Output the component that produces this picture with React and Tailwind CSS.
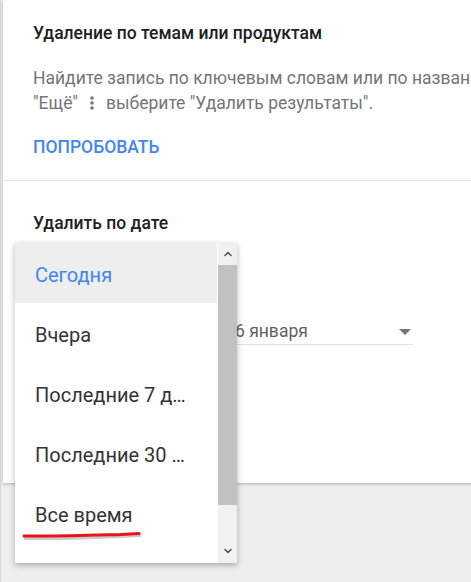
import { ChevronUp, ChevronDown } from 'lucide-react';

const periods = ['Сегодня', 'Вчера', 'Последние 7 дней', 'Последние 30 дней', 'Все время'];

function MoreIcon() {
  return (
    <svg width="6" height="16" viewBox="0 0 6 16" className="inline-block mx-[11px] align-[-2px]">
      <circle cx="3" cy="3" r="1.8" fill="#757575" />
      <circle cx="3" cy="8" r="1.8" fill="#757575" />
      <circle cx="3" cy="13" r="1.8" fill="#757575" />
    </svg>
  );
}

export default function App() {
  return (
    <div className="relative h-[582px] w-[471px] overflow-hidden bg-[#eeeeee] pl-[2px] border-l border-[#d6d6d6]" style={{ fontFamily: 'Roboto, "Noto Sans", sans-serif' }}>
      {/* карточка */}
      <div className="w-[520px] h-[483px] bg-white shadow-[0_1px_3px_rgba(0,0,0,0.25)]">
        <div className="pl-[30px] pt-[21px] pb-[21px] border-b border-[#e0e0e0]">
          <h2 className="text-[17.5px] leading-[24px] font-medium text-[#212121]">Удаление по темам или продуктам</h2>
          <p className="mt-[21px] text-[17.5px] leading-[25px] text-[#757575] whitespace-nowrap">
            Найдите запись по ключевым словам или по названию продукта, а затем в меню
            <br />
            "Ещё"<MoreIcon />выберите "Удалить результаты".
          </p>
          <div className="mt-[19px] text-[17.5px] leading-[24px] font-medium text-[#4285f4]">ПОПРОБОВАТЬ</div>
        </div>

        <div className="pl-[30px] pt-[30px]">
          <h2 className="text-[17.5px] leading-[24px] font-medium text-[#212121]">Удалить по дате</h2>
          <div className="mt-[78px] w-[380px] h-[32px] flex items-center justify-between border-b border-[#e0e0e0] pr-[2px] pt-[6px]">
            <span className="pl-[202px] text-[17.5px] text-[#616161]">6 января</span>
            <svg width="12" height="6" viewBox="0 0 12 6"><path d="M0 0h12L6 6z" fill="#757575" /></svg>
          </div>
        </div>
      </div>

      {/* выпадающий список */}
      <div className="absolute left-[14px] top-[243px] w-[222px] h-[320px] bg-white flex shadow-[0_2px_6px_rgba(0,0,0,0.3)]">
        <ul className="w-[202px] overflow-hidden">
          {periods.map((p, i) => (
            <li
              key={p}
              className={`h-[60px] flex items-center pl-[20px] pr-[24px] pt-[4px] text-[20px] ${i === 0 ? 'bg-[#eeeeee] text-[#4285f4]' : 'text-[#333333]'}`}
            >
              <span className="truncate">{p}</span>
            </li>
          ))}
        </ul>
        <div className="ml-[1px] w-[19px] flex flex-col bg-[#f1f1f1]">
          <div className="h-[22px] flex items-center justify-center text-[#505050]">
            <ChevronUp size={12} strokeWidth={3} />
          </div>
          <div className="h-[240px] bg-[#c1c1c1]" />
          <div className="flex-1 flex items-end justify-center pb-[6px] text-[#505050]">
            <ChevronDown size={12} strokeWidth={3} />
          </div>
        </div>
        {/* красная пометка */}
        <svg className="absolute left-[6px] top-[287px]" width="130" height="10" viewBox="0 0 130 10">
          <path d="M3 7 C40 7.5 80 6 100 5 L118 4" stroke="#8a8a8a" strokeWidth="3" fill="none" strokeLinecap="round" opacity="0.45" transform="translate(1 1.5)" />
          <path d="M3 6 C40 6.5 80 5 100 4.5 L118 3.5" stroke="#e8141b" strokeWidth="3" fill="none" strokeLinecap="round" />
        </svg>
      </div>
    </div>
  );
}
